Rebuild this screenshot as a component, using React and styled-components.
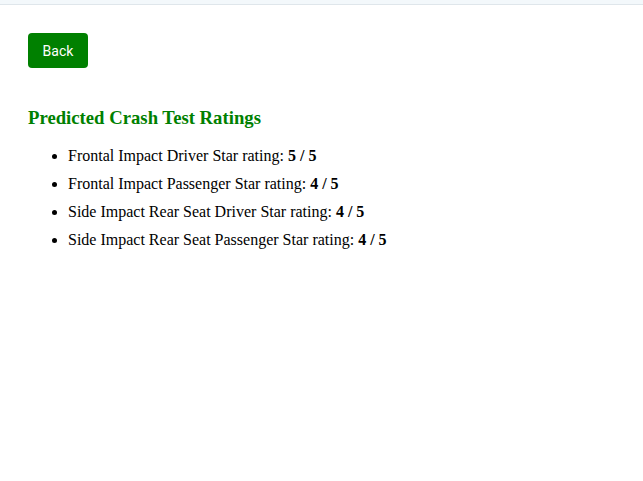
import styled, { createGlobalStyle } from "styled-components";

const GlobalStyle = createGlobalStyle`
  body {
    margin: 0;
    background: #ffffff;
    font-family: "Liberation Serif", "Times New Roman", serif;
    color: #000000;
  }
`;

const TopStrip = styled.div`
  height: 4px;
  background-color: #f3f8fb;
  border-bottom: 1px solid #dfe6eb;
`;

const Page = styled.main`
  padding: 28px;
`;

const BackButton = styled.button`
  height: 35px;
  width: 60px;
  padding: 0;
  background-color: #008000;
  color: #ffffff;
  border: none;
  border-radius: 4px;
  font-family: Roboto, "Liberation Sans", Arial, sans-serif;
  font-size: 14px;
  cursor: pointer;
`;

const Heading = styled.h3`
  color: #008000;
  font-size: 18.72px;
  margin: 39px 0 18px;
`;

const RatingList = styled.ul`
  margin: 0;
  padding-left: 40px;
`;

const RatingItem = styled.li`
  font-size: 16px;
  margin-bottom: 10px;
`;

const ratings = [
  { label: "Frontal Impact Driver Star rating", stars: 5 },
  { label: "Frontal Impact Passenger Star rating", stars: 4 },
  { label: "Side Impact Rear Seat Driver Star rating", stars: 4 },
  { label: "Side Impact Rear Seat Passenger Star rating", stars: 4 },
];

export default function App() {
  return (
    <>
      <GlobalStyle />
      <TopStrip />
      <Page>
        <BackButton type="button">Back</BackButton>
        <Heading>Predicted Crash Test Ratings</Heading>
        <RatingList>
          {ratings.map((r) => (
            <RatingItem key={r.label}>
              {r.label}: <b>{r.stars} / 5</b>
            </RatingItem>
          ))}
        </RatingList>
      </Page>
    </>
  );
}
